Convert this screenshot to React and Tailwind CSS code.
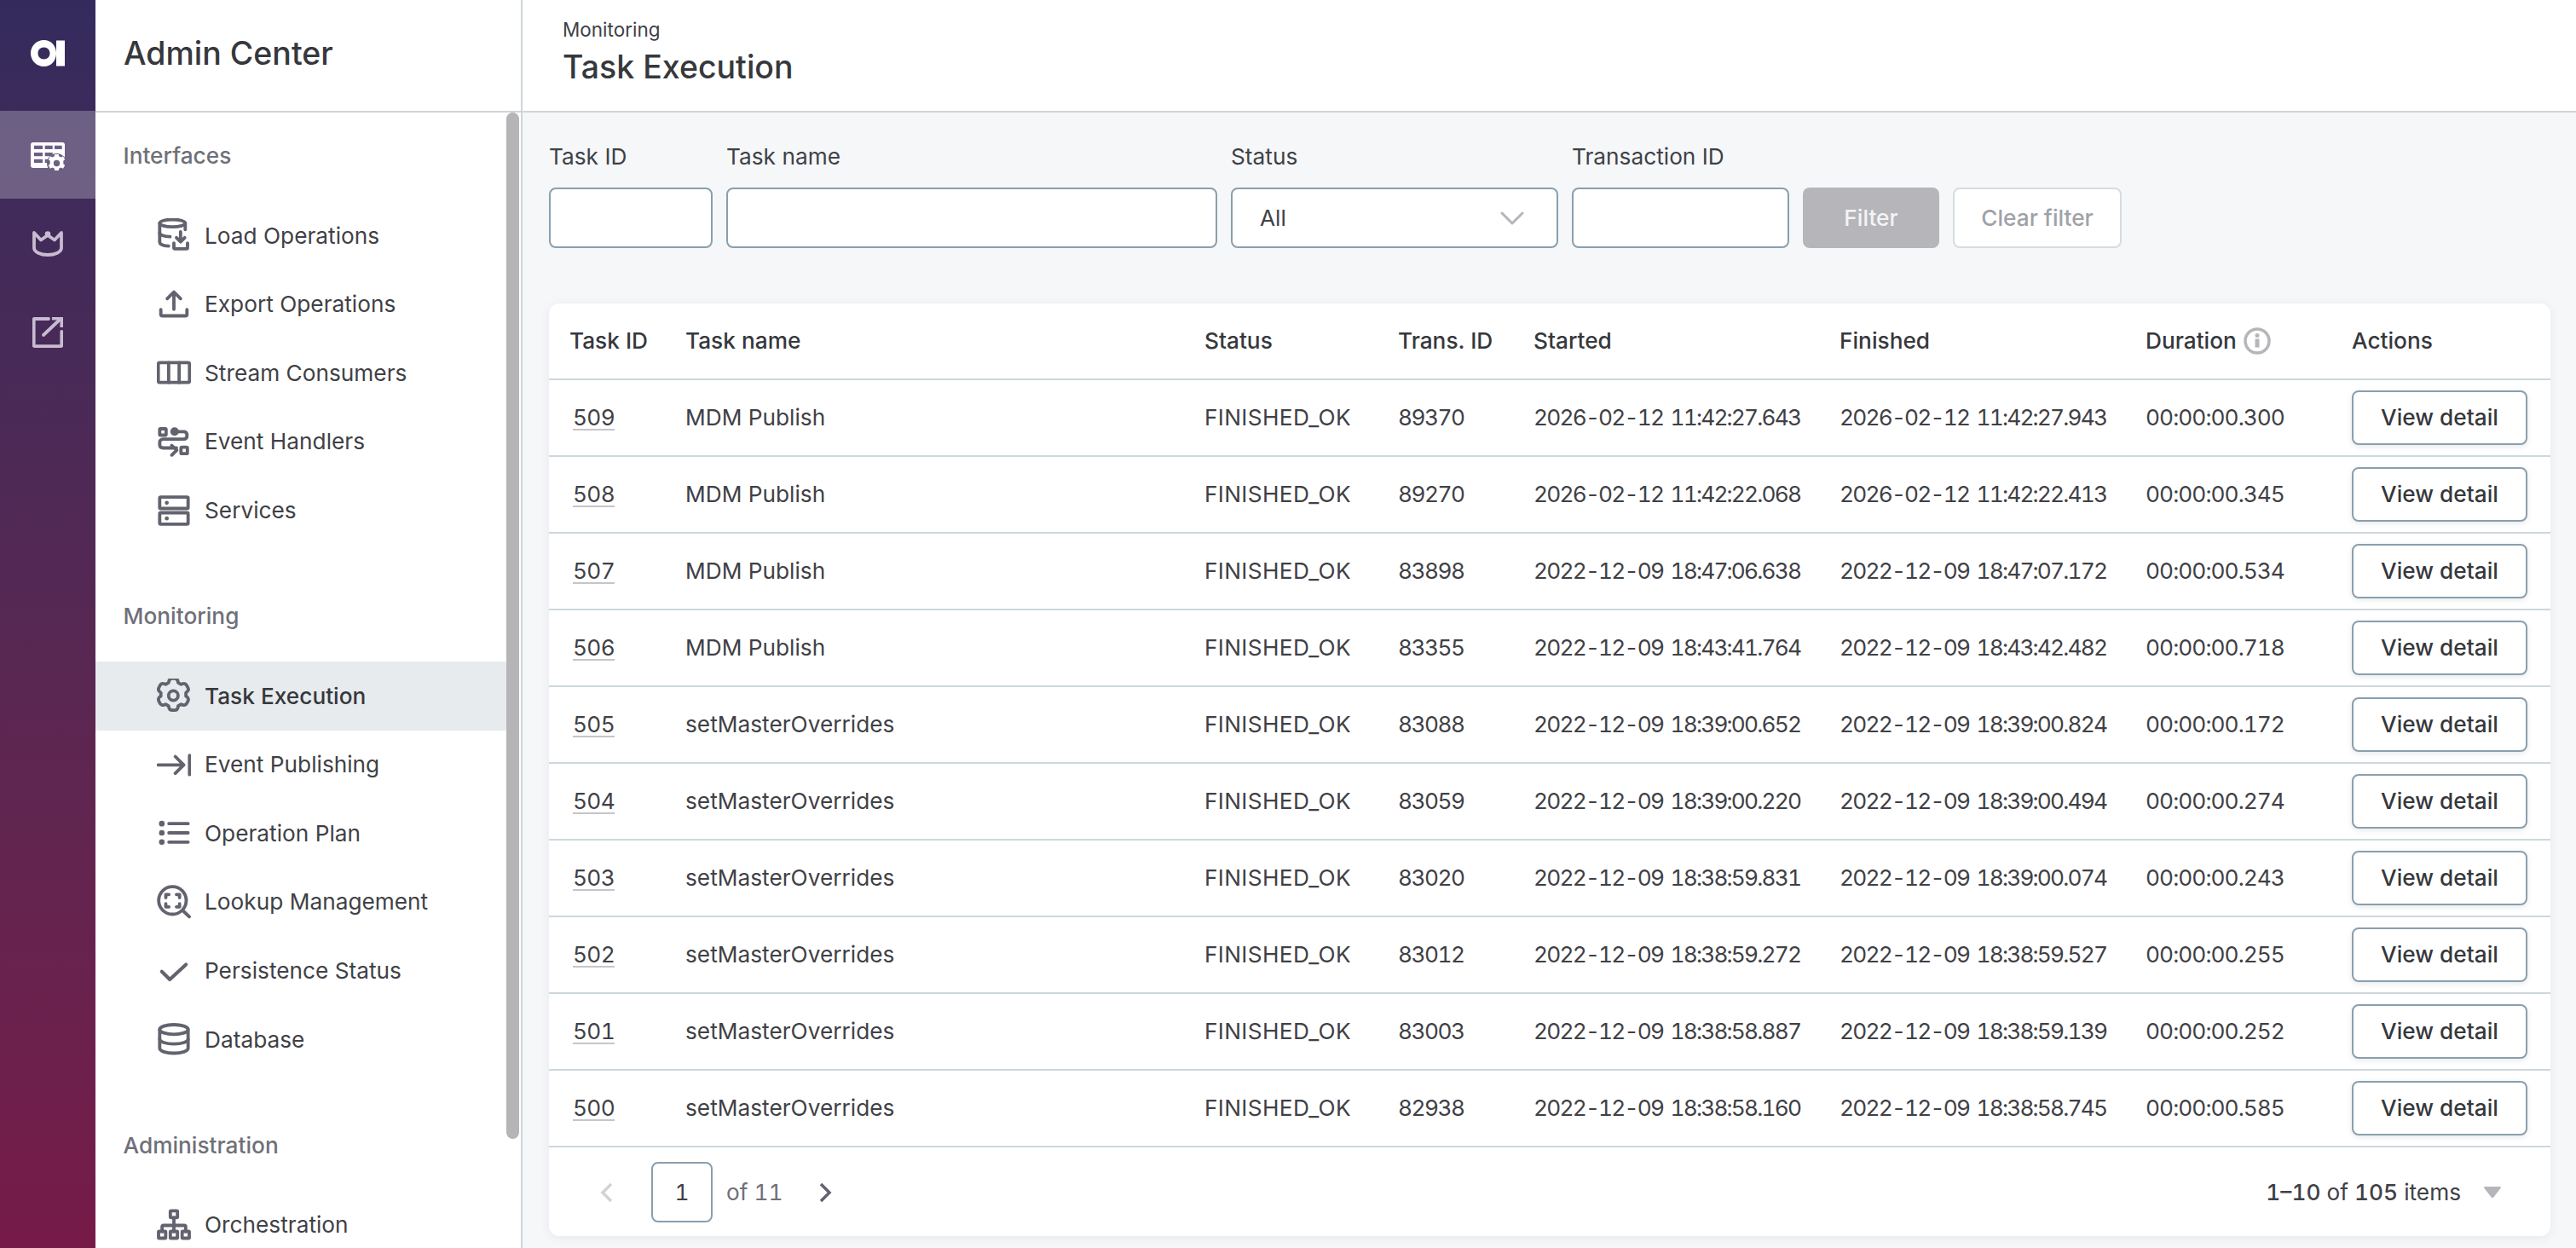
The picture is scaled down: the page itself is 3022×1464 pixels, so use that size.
import React from 'react';

const Ic = ({ children, className = 'w-10 h-10 text-[#62636e]', sw = 2.3 }) => (
  <svg viewBox="0 0 24 24" fill="none" stroke="currentColor" strokeWidth={sw} strokeLinecap="round" strokeLinejoin="round" className={className}>
    {children}
  </svg>
);

const icons = {
  load: (
    <>
      <ellipse cx="11" cy="3.500" rx="9" ry="2.600" />
      <path d="M2 3.500v13.300c0 1.500 2.600 2.600 6.300 2.800" />
      <path d="M2 10.300c0 1.400 3 2.600 7.300 2.700" />
      <path d="M20 3.500v4.500" />
      <path d="M16.700 9.500v7M13.800 13.700l2.900 2.900 2.900-2.900" />
      <path d="M12 17.500v3.200c0 .5.300.8.800.8h8c.5 0 .8-.300.8-.8v-3.200" />
    </>
  ),
  export: <path d="M12 15.500V3.500M7.300 8 12 3.300 16.700 8M2.800 15.700v3.300c0 .7.400 1.100 1.100 1.100h16.200c.7 0 1.100-.4 1.100-1.100v-3.300" />,
  stream: (
    <>
      <rect x="1" y="5" width="22" height="14" rx="1.200" />
      <path d="M8.300 5v14M15.700 5v14" />
    </>
  ),
  handlers: (
    <>
      <rect x="2" y="3" width="4.500" height="4.500" rx=".6" />
      <rect x="17" y="16" width="4.500" height="4.500" rx=".6" />
      <circle cx="12.500" cy="5" r="3" fill="currentColor" stroke="none" />
      <path d="M12.500 5h6.300c1.500 0 2.400.8 2.400 2.300v.7c0 1.500-.9 2.300-2.400 2.300H4.500c-1.500 0-2.500.9-2.500 2.300v1.500c0 1.500 1 2.400 2.500 2.400h9.300M10.500 14.700l3.500 3.400-3.500 3.400" />
    </>
  ),
  services: (
    <>
      <rect x="2" y="2.500" width="20" height="8" rx=".8" />
      <rect x="2" y="13.500" width="20" height="8" rx=".8" />
      <circle cx="7" cy="6.500" r="1.400" fill="currentColor" stroke="none" />
      <circle cx="7" cy="17.500" r="1.400" fill="currentColor" stroke="none" />
    </>
  ),
  gear: (
    <g transform="translate(-2.200 -2.400) scale(1.200)">
      <path d="M12.200 1.900c1 0 1.800.8 2 1.800l.1.7 1.800 1 .7-.3c1-.3 2 0 2.500.9l.7 1.200c.5.9.3 2-.5 2.600l-.6.500v2l.6.4c.8.7 1 1.800.5 2.700l-.7 1.200c-.5.9-1.600 1.200-2.500.8l-.7-.3-1.800 1-.1.8c-.2 1-1 1.700-2 1.700h-1.300c-1 0-1.800-.7-2-1.700l-.2-.8-1.700-1-.8.3c-.9.4-2 .1-2.500-.8l-.6-1.200c-.5-.9-.3-2 .5-2.700l.6-.4v-2l-.6-.5c-.8-.6-1-1.700-.5-2.600l.6-1.200c.5-.9 1.600-1.200 2.500-.9l.8.3 1.700-1 .2-.7c.2-1 1-1.800 2-1.800z" strokeWidth="1.900" />
      <circle cx="11.500" cy="12" r="2.800" strokeWidth="1.900" />
    </g>
  ),
  publish: <path d="M1 12.200h17.500M13 6.300l5.900 5.900-5.900 5.900M23 5.500v13.500" />,
  plan: (
    <>
      <path d="M8.500 5.500H22M8.500 12H22M8.500 18.500H22" />
      <circle cx="3.500" cy="5.500" r="2" fill="currentColor" stroke="none" />
      <circle cx="3.500" cy="12" r="2" fill="currentColor" stroke="none" />
      <circle cx="3.500" cy="18.500" r="2" fill="currentColor" stroke="none" />
    </>
  ),
  lookup: (
    <>
      <circle cx="11" cy="11" r="9.700" />
      <path d="m18.200 18 4.600 4.400" />
      <path d="M6.300 9V6.800h2.200M13.800 6.800H16V9M16 13.300v2.200h-2.200M8.500 15.500H6.300v-2.200" />
    </>
  ),
  check: <path d="m3.500 12.500 5.600 5.500L20.500 7.500" strokeWidth="2.500" />,
  database: (
    <>
      <ellipse cx="12" cy="5.200" rx="10" ry="3.400" />
      <path d="M2 5.200v13.300c0 1.900 4.500 3.400 10 3.400s10-1.500 10-3.400V5.200" />
      <path d="M2 12c0 1.900 4.500 3.400 10 3.400s10-1.500 10-3.400" />
    </>
  ),
  orchestration: (
    <>
      <rect x="9.500" y="2" width="5" height="4.800" rx=".5" />
      <rect x="1.200" y="16.500" width="5" height="4.800" rx=".5" />
      <rect x="9.500" y="16.500" width="5" height="4.800" rx=".5" />
      <rect x="17.800" y="16.500" width="5" height="4.800" rx=".5" />
      <path d="M12 6.800v9.700M3.700 16.500v-3.200c0-.7.300-1 1-1h14.600c.7 0 1 .3 1 1v3.200" />
    </>
  ),
};

const sections = [
  { title: 'Interfaces', items: [['Load Operations', 'load'], ['Export Operations', 'export'], ['Stream Consumers', 'stream'], ['Event Handlers', 'handlers'], ['Services', 'services']] },
  { title: 'Monitoring', items: [['Task Execution', 'gear', true], ['Event Publishing', 'publish'], ['Operation Plan', 'plan'], ['Lookup Management', 'lookup'], ['Persistence Status', 'check'], ['Database', 'database']] },
  { title: 'Administration', items: [['Orchestration', 'orchestration']] },
];

const rows = [
  ['509', 'MDM Publish', '89370', '2026-02-12 11:42:27.643', '2026-02-12 11:42:27.943', '00:00:00.300'],
  ['508', 'MDM Publish', '89270', '2026-02-12 11:42:22.068', '2026-02-12 11:42:22.413', '00:00:00.345'],
  ['507', 'MDM Publish', '83898', '2022-12-09 18:47:06.638', '2022-12-09 18:47:07.172', '00:00:00.534'],
  ['506', 'MDM Publish', '83355', '2022-12-09 18:43:41.764', '2022-12-09 18:43:42.482', '00:00:00.718'],
  ['505', 'setMasterOverrides', '83088', '2022-12-09 18:39:00.652', '2022-12-09 18:39:00.824', '00:00:00.172'],
  ['504', 'setMasterOverrides', '83059', '2022-12-09 18:39:00.220', '2022-12-09 18:39:00.494', '00:00:00.274'],
  ['503', 'setMasterOverrides', '83020', '2022-12-09 18:38:59.831', '2022-12-09 18:39:00.074', '00:00:00.243'],
  ['502', 'setMasterOverrides', '83012', '2022-12-09 18:38:59.272', '2022-12-09 18:38:59.527', '00:00:00.255'],
  ['501', 'setMasterOverrides', '83003', '2022-12-09 18:38:58.887', '2022-12-09 18:38:59.139', '00:00:00.252'],
  ['500', 'setMasterOverrides', '82938', '2022-12-09 18:38:58.160', '2022-12-09 18:38:58.745', '00:00:00.585'],
];

function Rail() {
  return (
    <div className="w-[112px] shrink-0 flex flex-col bg-gradient-to-b from-[#342b5d] to-[#761a48]">
      <div className="h-[130px] flex items-center justify-center">
        <svg viewBox="0 0 40 32" className="w-10 h-8 mb-[4px]">
          <path fill="#fff" fillRule="evenodd" d="M15.500 0C24 0 30 6.800 30 15.500S24 31 15.500 31 0 24.200 0 15.500 7 0 15.500 0zm0 8.500c-4.200 0-7 3-7 7s2.800 7 7 7 7-3 7-7-2.800-7-7-7z" />
          <rect x="30" y=".5" width="10" height="30" fill="#fff" />
        </svg>
      </div>
      <div className="h-[103px] bg-white/25 flex items-center justify-center">
        <svg viewBox="0 0 40 36" className="w-10 h-9 mt-[7px]">
          <mask id="tableCut">
            <rect width="40" height="36" fill="#fff" />
            <circle cx="30.500" cy="24.500" r="11.500" fill="#000" />
          </mask>
          <path mask="url(#tableCut)" fill="#fff" fillRule="evenodd" d="M3 0h34c2 0 3 1.200 3 3v24c0 2-1 3-3 3H3c-2 0-3-1-3-3V3C0 1.200 1 0 3 0zm1 3.700V8h10V3.700zm12.700 0V8h9V3.700zm11.300 0V8h8.700V3.700zM4 12v4.300h10V12zm12.700 0v4.300h9V12zM4 19.700V24h10v-4.300zm12.700 0V24h9v-4.300z" />
          <path fill="#fff" fillRule="evenodd" d="M28.300 14h4.400l.7 2.500 2.300 1 2.300-1.300 2.200 3.800-1.900 1.800v3.400l1.900 1.800-2.200 3.800-2.300-1.300-2.300 1-.7 2.500h-4.400l-.7-2.500-2.300-1-2.300 1.300-2.200-3.800 1.900-1.800v-3.400l-1.900-1.800 2.200-3.800 2.300 1.300 2.300-1zm2.200 6.800a3.700 3.700 0 100 7.400 3.700 3.700 0 000-7.400z" />
        </svg>
      </div>
      <div className="h-[106px] flex items-center justify-center text-[#c8bbd0]">
        <svg viewBox="0 0 36 30" fill="none" stroke="currentColor" strokeWidth="3.800" className="w-9 h-[30px]">
          <path d="M2 2v18c0 4.500 7.300 8 16 8s16-3.500 16-8V2l-8 8.500-8-5.500-8 5.500z" strokeLinejoin="round" />
          <circle cx="18" cy="3.500" r="3.300" fill="currentColor" stroke="none" />
        </svg>
      </div>
      <div className="h-[102px] flex items-center justify-center text-[#c8bbd0]">
        <svg viewBox="0 0 36 36" fill="none" stroke="currentColor" strokeWidth="3.800" strokeLinecap="round" className="w-9 h-9">
          <path d="M19 2H2.500c-.5 0-.8.300-.8.800v30.500c0 .5.300.8.800.8h31c.5 0 .8-.300.800-.8V17" />
          <path d="M13 21 32 3" />
          <path d="M23 1.700h11.300V12" strokeLinecap="butt" />
        </svg>
      </div>
    </div>
  );
}

function Sidebar() {
  return (
    <div className="w-[501px] shrink-0 flex flex-col bg-white border-r-2 border-[#ccd5da] overflow-hidden">
      <div className="h-[132px] shrink-0 flex items-center pl-[33px] pb-[4px] border-b-2 border-[#ccd5da] text-[37.500px] font-medium text-[#36383c]">
        Admin Center
      </div>
      <div className="flex flex-1 min-h-0">
        <div className="flex-1 min-w-0 flex flex-col">
          {sections.map((s) => (
            <div key={s.title} className="shrink-0 mb-[33px]">
              <div className="h-[52px] mt-[25px] mb-[27px] flex items-center pl-[32.500px] text-[26.250px] font-medium text-[#6f7079]">{s.title}</div>
              {s.items.map(([label, icon, active]) => (
                <div key={label} className={`h-[80.600px] flex items-center pl-[72px] gap-[16px] text-[26.250px] ${active ? 'bg-[#e8ebee] font-medium text-[#36383c]' : 'text-[#3f4146]'}`}>
                  <Ic>{icons[icon]}</Ic>
                  <span>{label}</span>
                </div>
              ))}
            </div>
          ))}
        </div>
        <div className="w-[15px] mr-[2px] h-[1204px] shrink-0 rounded-full bg-[#b5b5b8]" />
      </div>
    </div>
  );
}

function Field({ label, width, children }) {
  return (
    <div className={`flex flex-col ${width}`}>
      <label className="h-[74px] text-[26.250px] leading-[76px] text-[#3f4146]">{label}</label>
      {children}
    </div>
  );
}

const inputCls = 'h-[71px] w-full rounded-[8px] border-2 border-[#8a9fae] bg-white';

function Filters() {
  return (
    <div className="flex items-end gap-[16px] pl-[31px] h-[160px] pb-[1px] shrink-0">
      <Field label="Task ID" width="w-[192px]"><div className={inputCls} /></Field>
      <Field label="Task name" width="w-[576px]"><div className={inputCls} /></Field>
      <Field label="Status" width="w-[384px]">
        <div className={`${inputCls} flex items-center justify-between pl-[32px] pr-[38px] text-[26.250px] text-[#3f4146]`}>
          All
          <svg viewBox="0 0 28 16" fill="none" stroke="#b5b5ba" strokeWidth="3" strokeLinecap="round" strokeLinejoin="round" className="w-7 h-4">
            <path d="M2 2l12 12L26 2" />
          </svg>
        </div>
      </Field>
      <Field label="Transaction ID" width="w-[255px]"><div className={inputCls} /></Field>
      <div className="w-[160px] h-[71px] rounded-[8px] bg-[#b5b5ba] flex items-center justify-center text-[26.250px] font-medium text-white/85">Filter</div>
      <div className="w-[198px] h-[71px] rounded-[8px] bg-white border-2 border-[#d5dde2] flex items-center justify-center text-[26.250px] font-medium text-[#a0a1a8]">Clear filter</div>
    </div>
  );
}

function Table() {
  return (
    <div className="ml-[31px] w-[2348px] h-[1094px] mt-[64px] shrink-0 rounded-[12px] bg-white shadow-[0_2px_12px_rgba(60,70,90,0.08)] overflow-hidden">
      <table className="w-full table-fixed text-left text-[26.250px] text-[#3f4146] border-collapse">
        <colgroup>
          <col className="w-[136px]" />
          <col className="w-[609px]" />
          <col className="w-[227px]" />
          <col className="w-[159px]" />
          <col className="w-[359px]" />
          <col className="w-[359px]" />
          <col className="w-[242px]" />
          <col className="w-[257px]" />
        </colgroup>
        <thead>
          <tr className="h-[89px] border-b-2 border-[#ccd8dc] font-medium text-[#36383c]">
            {['Task ID', 'Task name', 'Status', 'Trans. ID', 'Started', 'Finished'].map((h) => (
              <th key={h} className="pl-[24px] font-medium">{h}</th>
            ))}
            <th className="pl-[24px] font-medium">
              <span className="flex items-center gap-[8px]">
                Duration
                <svg viewBox="0 0 32 32" className="w-8 h-8">
                  <circle cx="16" cy="16" r="14" fill="none" stroke="#b5b5ba" strokeWidth="3.500" />
                  <rect x="13.500" y="13.500" width="5" height="10" fill="#b5b5ba" />
                  <circle cx="16" cy="9.500" r="2.500" fill="#b5b5ba" />
                </svg>
              </span>
            </th>
            <th className="pl-[24px] font-medium">Actions</th>
          </tr>
        </thead>
        <tbody>
          {rows.map((r) => (
            <tr key={r[0]} className="h-[90px] border-b-2 border-[#ccd8dc] whitespace-nowrap">
              <td className="pl-[28px] tabular-nums tracking-[-0.7px]"><span className="underline decoration-[#c5c5ca] underline-offset-[4px] decoration-2">{r[0]}</span></td>
              <td className="pl-[24px]">{r[1]}</td>
              <td className="pl-[24px] tracking-[0.35px]">FINISHED_OK</td>
              <td className="pl-[24px] tabular-nums tracking-[-1.500px]">{r[2]}</td>
              <td className="pl-[24px] tabular-nums tracking-[-1.800px] [word-spacing:3px]">{r[3]}</td>
              <td className="pl-[24px] tabular-nums tracking-[-1.800px] [word-spacing:3px]">{r[4]}</td>
              <td className="pl-[24px] tabular-nums tracking-[-0.950px]">{r[5]}</td>
              <td className="pl-[24px]">
                <button className="w-[206px] h-[64px] rounded-[8px] border-2 border-[#8a9fae] bg-white text-[26.250px] font-medium text-[#36383c] shadow-[0_2px_6px_rgba(60,70,90,0.12)]">View detail</button>
              </td>
            </tr>
          ))}
        </tbody>
      </table>
      <div className="h-[105px] flex items-center justify-between text-[26.250px] text-[#6f7079] tabular-nums">
        <div className="flex items-center">
          <svg viewBox="0 0 16 24" fill="none" stroke="#d2d3d6" strokeWidth="3.500" className="w-4 h-6 ml-[60px]"><path d="M13 2 3 12l10 10" /></svg>
          <div className="ml-[44px] w-[72px] h-[71px] rounded-[8px] border-2 border-[#8a9fae] flex items-center justify-center text-[#3f4146]">1</div>
          <span className="ml-[16px]">of 11</span>
          <svg viewBox="0 0 16 24" fill="none" stroke="#62636e" strokeWidth="3.500" className="w-4 h-6 ml-[41px]"><path d="m3 2 10 10L3 22" /></svg>
        </div>
        <div className="flex items-center pr-[58px] text-[#3f4146]">
          <span><span className="font-medium">1–10</span> of <span className="font-medium">105</span> items</span>
          <svg viewBox="0 0 20 14" className="w-5 h-[14px] ml-[27px]"><path fill="#b5b5ba" d="M1.500 0h17c1.200 0 1.800 1.200 1 2l-8.200 10.600c-.7.800-1.900.8-2.600 0L.5 2C-.300 1.200.300 0 1.500 0z" /></svg>
        </div>
      </div>
    </div>
  );
}

export default function App() {
  return (
    <div className="h-screen flex overflow-hidden bg-[#f5f7f9] font-['Inter',sans-serif]">
      <Rail />
      <Sidebar />
      <div className="flex-1 min-w-0 flex flex-col">
        <div className="h-[132px] shrink-0 bg-white border-b-2 border-[#ccd5da] pl-[47px] flex flex-col justify-center pb-[5px]">
          <div className="text-[22.500px] leading-[30px] text-[#3f4146]">Monitoring</div>
          <div className="text-[37.500px] leading-[52px] mt-[3px] font-medium text-[#36383c]">Task Execution</div>
        </div>
        <Filters />
        <Table />
      </div>
    </div>
  );
}
